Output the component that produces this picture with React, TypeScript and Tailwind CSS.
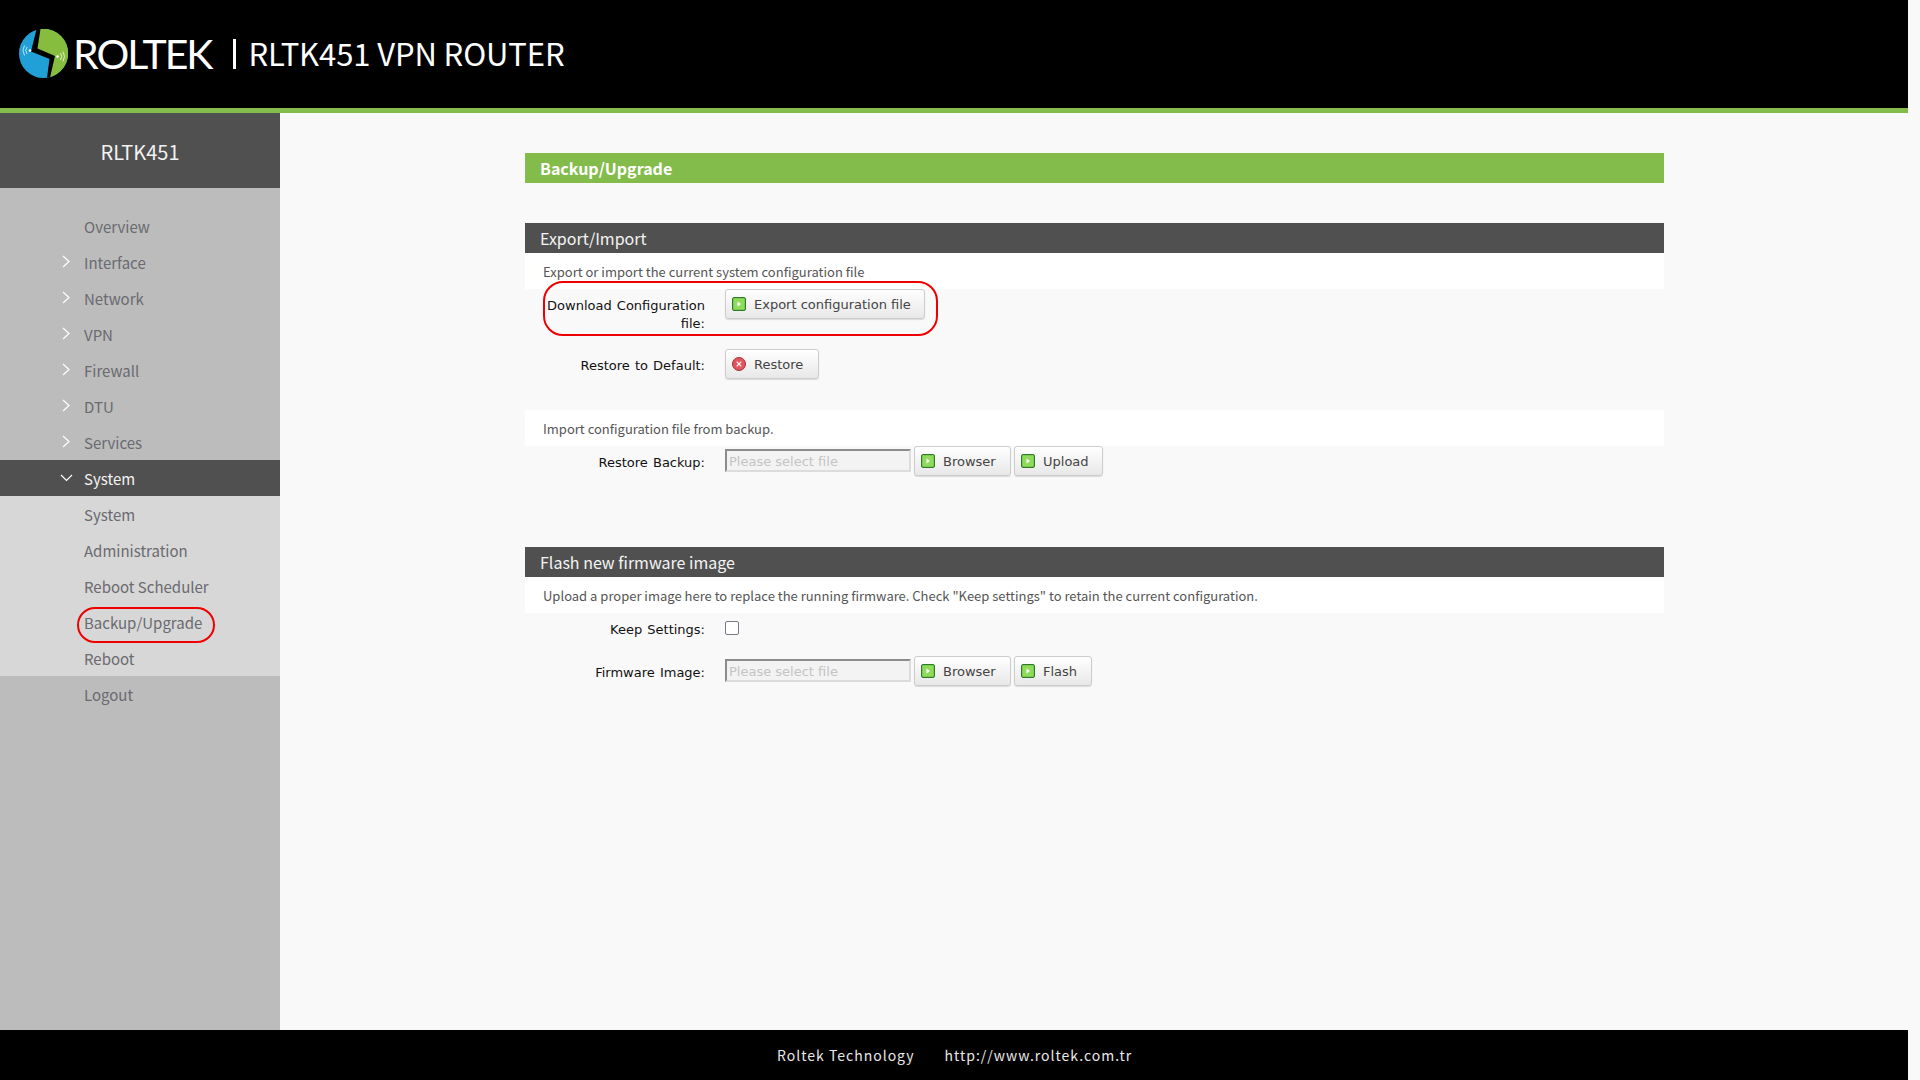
import React from "react";

const CJK = "font-['Noto_Sans_CJK_SC','Noto_Sans',sans-serif]";

const mainMenu = ["Interface", "Network", "VPN", "Firewall", "DTU", "Services"];
const subMenu = ["System", "Administration", "Reboot Scheduler", "Backup/Upgrade", "Reboot"];

const Logo = () => (
  <svg width="49" height="49" viewBox="0 0 49 49" className="shrink-0">
    <circle cx="24.5" cy="24.5" r="24.5" fill="#21a0d8" />
    <path d="M20 0 A24.5 24.5 0 0 1 29 48.6 L33 28 L16 21 Z" fill="#87bd3f" />
    <path d="M17.5 0.3 L21.5 0 L18.5 19.5 L36 27 L31 48.5 L28 48.7 L30.5 30 L12 22.5 Z" fill="#000" />
    <circle cx="11" cy="21.5" r="1.3" fill="#fff" />
    <circle cx="38.5" cy="27.5" r="1.3" fill="#fff" />
    <g fill="none" stroke="#fff" strokeWidth="0.7">
      <path d="M8 18 Q5.5 21.5 8 25" />
      <path d="M5.5 16.5 Q2.5 21.5 5.5 26.5" />
      <path d="M41.5 24 Q44 27.5 41.5 31" />
      <path d="M44 22.5 Q47 27.5 44 32.5" />
    </g>
  </svg>
);

const ChevronRight = () => (
  <svg width="8" height="13" viewBox="0 0 8 13" className="absolute left-[62px] top-[11px]">
    <path d="M1 1 L7 6.5 L1 12" fill="none" stroke="#fff" strokeWidth="1.2" />
  </svg>
);

const ChevronDown = () => (
  <svg width="13" height="8" viewBox="0 0 13 8" className="absolute left-[60px] top-[14px]">
    <path d="M1 1 L6.5 6.5 L12 1" fill="none" stroke="#fff" strokeWidth="1.2" />
  </svg>
);

const GreenIcon = () => (
  <svg width="14" height="14" viewBox="0 0 14 14" className="shrink-0 -mt-[1px]">
    <rect x="0.5" y="0.5" width="13" height="13" rx="1.5" fill="#7ccb4c" stroke="#2f7a2c" />
    <rect x="2" y="2" width="10" height="10" fill="#8fdc5c" />
    <path d="M5.5 4.5 L9 7 L5.5 9.5 Z" fill="#fff" />
  </svg>
);

const RedIcon = () => (
  <svg width="14" height="14" viewBox="0 0 14 14" className="shrink-0 -mt-[1px]">
    <circle cx="7" cy="7" r="6.5" fill="#e0565c" stroke="#a83038" />
    <path d="M4.7 4.7 L9.3 9.3 M9.3 4.7 L4.7 9.3" stroke="#fff" strokeWidth="1.2" />
  </svg>
);

const Button = ({ label, width, red }: { label: string; width: string; red?: boolean }) => (
  <button
    className={`${width} h-[30px] flex items-center gap-[8px] pl-[6px] rounded-[3px] border border-[#cccccc] bg-gradient-to-b from-[#ffffff] to-[#e8e8e8] text-[13px] text-[#444444] font-['DejaVu_Sans',sans-serif] shadow-[0_1px_1px_rgba(0,0,0,0.12)]`}
  >
    {red ? <RedIcon /> : <GreenIcon />}
    <span className="whitespace-nowrap pt-[1px]">{label}</span>
  </button>
);

const Field = ({ label, className, children }: { label: string; className?: string; children: React.ReactNode }) => (
  <div className={`flex items-start ${className ?? ""}`}>
    <div className="w-[180px] shrink-0 pl-[20px] pt-[8px] text-right text-[13px] leading-[18px] [word-spacing:1px] text-[#111111] font-['DejaVu_Sans',sans-serif]">
      {label}
    </div>
    <div className="ml-[20px] flex items-start">{children}</div>
  </div>
);

const FileInput = () => (
  <input
    readOnly
    placeholder="Please select file"
    className="w-[186px] h-[23px] mt-[3px] mr-[3px] px-[2px] pt-[1px] border-2 border-t-[#8c8c8c] border-l-[#8c8c8c] border-r-[#dcdcdc] border-b-[#dcdcdc] bg-[#f3f3f3] text-[13px] placeholder:text-[#c4c4c4] font-['DejaVu_Sans',sans-serif]"
  />
);

const SectionTitle = ({ title }: { title: string }) => (
  <div className={`h-[30px] bg-[#505050] pl-[15px] text-[16px] leading-[31px] text-[#f4f4f4] ${CJK}`}>{title}</div>
);

const Description = ({ text }: { text: string }) => (
  <div className={`h-[36px] bg-white pl-[18px] text-[13px] leading-[37px] text-[#555555] ${CJK}`}>{text}</div>
);

const App: React.FC = () => {
  return (
    <div className="h-screen w-full overflow-hidden bg-[#f9f9f9]">
      <div className="w-[1908px] h-full flex flex-col">
        {/* Header */}
        <header className="h-[113px] shrink-0 bg-black border-b-[5px] border-[#84bc4c] flex items-center pl-[19px] pb-[1px] text-white">
          <Logo />
          <span className="ml-[5px] text-[41px] leading-none tracking-[-2px] font-['Lato',sans-serif]">ROLTEK</span>
          <span className="ml-[22px] w-[3px] h-[30px] bg-white" />
          <span className={`ml-[12px] -mt-[3px] text-[31px] tracking-[-0.1px] leading-none ${CJK}`}>RLTK451 VPN ROUTER</span>
        </header>

        <div className="flex-1 flex min-h-0">
          {/* Sidebar */}
          <aside className={`w-[280px] shrink-0 bg-[#bcbcbc] ${CJK}`}>
            <div className="h-[75px] bg-[#505050] text-center text-[20px] leading-[77px] text-[#f2f2f2]">RLTK451</div>
            <nav className="pt-[20px] text-[15px] leading-[38px] text-[#6a6a70]">
              <div className="h-[36px] pl-[84px]">Overview</div>
              {mainMenu.map((item) => (
                <div key={item} className="relative h-[36px] pl-[84px]">
                  <ChevronRight />
                  {item}
                </div>
              ))}
              <div className="relative h-[36px] pl-[84px] bg-[#505050] text-[#f2f2f2]">
                <ChevronDown />
                System
              </div>
              <div className="bg-[#d7d7d7]">
                {subMenu.map((item) => (
                  <div key={item} className="relative h-[36px] pl-[84px]">
                    {item}
                    {item === "Backup/Upgrade" && (
                      <span className="absolute left-[77px] top-[3px] w-[138px] h-[36px] rounded-[18px] border-2 border-[#ee0000]" />
                    )}
                  </div>
                ))}
              </div>
              <div className="h-[36px] pl-[84px]">Logout</div>
            </nav>
          </aside>

          {/* Content */}
          <main className="ml-[245px] w-[1139px] pt-[40px]">
            <div className={`h-[30px] bg-[#84bc4c] pl-[15px] text-[16px] font-bold leading-[31px] text-white ${CJK}`}>Backup/Upgrade</div>

            <div className="mt-[40px]">
              <SectionTitle title="Export/Import" />
              <Description text="Export or import the current system configuration file" />
              <div className="relative">
                <span className="absolute left-[18px] top-[-8px] w-[395px] h-[55px] rounded-[20px] border-2 border-[#ee0000]" />
                <Field label="Download Configuration file:" className="h-[60px]">
                  <Button label="Export configuration file" width="w-[200px]" />
                </Field>
              </div>
              <Field label="Restore to Default:" className="h-[61px]">
                <Button label="Restore" width="w-[94px]" red />
              </Field>
              <Description text="Import configuration file from backup." />
              <Field label="Restore Backup:">
                <FileInput />
                <Button label="Browser" width="w-[97px] mr-[3px]" />
                <Button label="Upload" width="w-[89px]" />
              </Field>
            </div>

            <div className="mt-[71px]">
              <SectionTitle title="Flash new firmware image" />
              <Description text={'Upload a proper image here to replace the running firmware. Check "Keep settings" to retain the current configuration.'} />
              <Field label="Keep Settings:" className="h-[43px]">
                <span className="mt-[8px] w-[14px] h-[14px] rounded-[2px] border border-[#77778a] bg-white" />
              </Field>
              <Field label="Firmware Image:">
                <FileInput />
                <Button label="Browser" width="w-[97px] mr-[3px]" />
                <Button label="Flash" width="w-[78px]" />
              </Field>
            </div>
          </main>
        </div>

        {/* Footer */}
        <footer className={`h-[50px] shrink-0 bg-black flex items-center pl-[777px] gap-[30px] text-[14px] tracking-[1px] text-[#e8e8e8] ${CJK}`}>
          <span>Roltek Technology</span>
          <span>http://www.roltek.com.tr</span>
        </footer>
      </div>
    </div>
  );
};

export default App;
